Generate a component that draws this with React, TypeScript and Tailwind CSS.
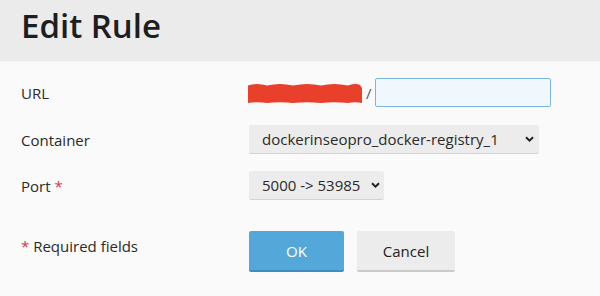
import React from "react";

function Chevron() {
  return (
    <svg width="9" height="6" viewBox="0 0 9 6" className="shrink-0">
      <path d="M1 1.2 L4.5 4.6 L8 1.2" fill="none" stroke="#222" strokeWidth="2" />
    </svg>
  );
}

function Scribble() {
  return (
    <svg width="114" height="20" viewBox="0 0 114 20" className="shrink-0">
      <path
        d="M0 2.5 Q9 -0.5 19 2.5 Q32 -0.5 45 2.5 Q59 -0.5 73 2.5 Q86 -0.5 100 2.5 Q108 0 112 2 L114 5 L114 20 Q107 18.5 100 20 Q86 18.5 73 20 Q59 18.5 45 20 Q32 18.5 19 20 Q9 18.5 0 20 Z"
        fill="#e8402a"
      />
    </svg>
  );
}

export default function App() {
  return (
    <div
      className="w-[600px] h-[296px] bg-[#fafafa] text-[#222] overflow-hidden"
      style={{ fontFamily: '"Open Sans", "Noto Sans", sans-serif' }}
    >
      <div className="h-[62px] bg-[#ebebeb] border-b border-[#f3f3f3] px-[21px] pt-[6px]">
        <h1 className="text-[33px] leading-[40px] font-semibold text-[#1e1e1e]">Edit Rule</h1>
      </div>
      <div className="px-[21px] pt-[16px] text-[15px] leading-[20px] text-[#2a2a2a]">
        <div className="flex items-center h-[29px]">
          <div className="w-[227px]">URL</div>
          <div className="flex items-center">
            <Scribble />
            <span className="ml-[4px] mr-[3px] text-[#555]">/</span>
            <div className="w-[176px] h-[29px] bg-[#f0f7fd] border border-[#7ab6e2] rounded-[2px]" />
          </div>
        </div>
        <div className="flex items-center h-[29px] mt-[18px]">
          <div className="w-[228px]">Container</div>
          <div className="w-[290px] h-[29px] bg-[#ececec] border-b border-[#d4d4d4] rounded-[2px] flex items-center justify-between pl-[13px] pr-[5px] text-[15px]">
            <span>dockerinseopro_docker-registry_1</span>
            <Chevron />
          </div>
        </div>
        <div className="flex items-center h-[29px] mt-[17px]">
          <div className="w-[228px]">
            Port <span className="text-[#d9363e]">*</span>
          </div>
          <div className="w-[135px] h-[29px] bg-[#ececec] border-b border-[#d4d4d4] rounded-[2px] flex items-center justify-between pl-[13px] pr-[4px] text-[15px]">
            <span>5000 -&gt; 53985</span>
            <Chevron />
          </div>
        </div>
        <div className="flex items-start mt-[31px]">
          <div className="w-[228px] pt-[5px]">
            <span className="text-[#d9363e]">*</span> Required fields
          </div>
          <div className="flex gap-[13px]">
            <button className="w-[95px] h-[41px] bg-[#53a8d9] border-b-2 border-[#3f8dc0] rounded-[2px] text-white text-[15px] font-medium">
              OK
            </button>
            <button className="w-[98px] h-[41px] bg-[#ececec] border-b-2 border-[#cacaca] rounded-[2px] text-[#222] text-[15px] font-medium">
              Cancel
            </button>
          </div>
        </div>
      </div>
    </div>
  );
}
